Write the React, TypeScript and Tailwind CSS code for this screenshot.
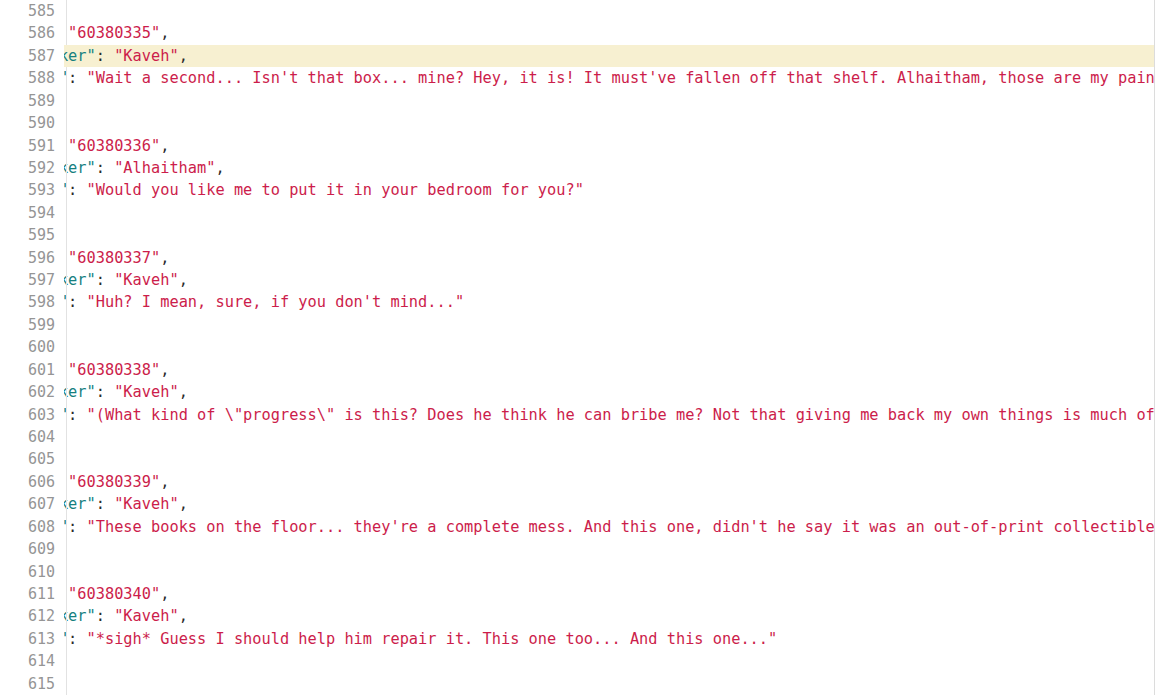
type Tok = { t: string; c: 'k' | 's' | 'p' }

const entries = [
  { id: '60380335', speaker: 'Kaveh', text: "Wait a second... Isn't that box... mine? Hey, it is! It must've fallen off that shelf. Alhaitham, those are my paintings!" },
  { id: '60380336', speaker: 'Alhaitham', text: 'Would you like me to put it in your bedroom for you?' },
  { id: '60380337', speaker: 'Kaveh', text: "Huh? I mean, sure, if you don't mind..." },
  { id: '60380338', speaker: 'Kaveh', text: '(What kind of \\"progress\\" is this? Does he think he can bribe me? Not that giving me back my own things is much of a bribe...)' },
  { id: '60380339', speaker: 'Kaveh', text: "These books on the floor... they're a complete mess. And this one, didn't he say it was an out-of-print collectible?" },
  { id: '60380340', speaker: 'Kaveh', text: '*sigh* Guess I should help him repair it. This one too... And this one...' },
]

function kv(key: string, val: string, last = false): Tok[] {
  return [
    { t: '    ', c: 'p' },
    { t: `"${key}"`, c: 'k' },
    { t: ': ', c: 'p' },
    { t: `"${val}"`, c: 's' },
    { t: last ? '' : ',', c: 'p' },
  ]
}

// lines 585..615
const lines: Tok[][] = [[{ t: '  {', c: 'p' }]]
entries.forEach((e, i) => {
  lines.push(kv('id', e.id))
  lines.push(kv('speaker', e.speaker))
  lines.push(kv('text', e.text, true))
  lines.push([{ t: '  },', c: 'p' }])
  if (i < entries.length - 1) lines.push([{ t: '  {', c: 'p' }])
})
lines.push([{ t: '  {', c: 'p' }])

const color = { k: 'text-[#16807f]', s: 'text-[#cc1d4b]', p: 'text-[#2a2a2a]' }

export default function App() {
  return (
    <div
      className="flex h-[695px] w-[1169px] overflow-hidden bg-white text-[15.3px] leading-[22.43px]"
      style={{ fontFamily: '"DejaVu Sans Mono", "Liberation Mono", monospace' }}
    >
      <div className="w-[64px] shrink-0 pr-[9px] text-right text-[15px] text-[#959595]">
        {lines.map((_, i) => (
          <div key={i} className="h-[22.43px] leading-[22.43px]">{585 + i}</div>
        ))}
      </div>
      <div className="relative w-[1091px] shrink-0 overflow-hidden border-r border-[#dcdcdc]">
        {/* indent guide */}
        <div className="absolute top-0 bottom-0 left-[2px] w-px bg-[#e2e2e2]" />
        {lines.map((l, i) => (
          <div key={i} className={`h-[22.43px] whitespace-pre ${i === 2 ? 'relative bg-[#f7f0d1]' : ''}`}>
            <div className="-ml-[88px]">
              {l.map((tk, j) => (
                <span key={j} className={color[tk.c]}>{tk.t}</span>
              ))}
            </div>
          </div>
        ))}
      </div>
      <div className="flex-1" />
    </div>
  )
}
